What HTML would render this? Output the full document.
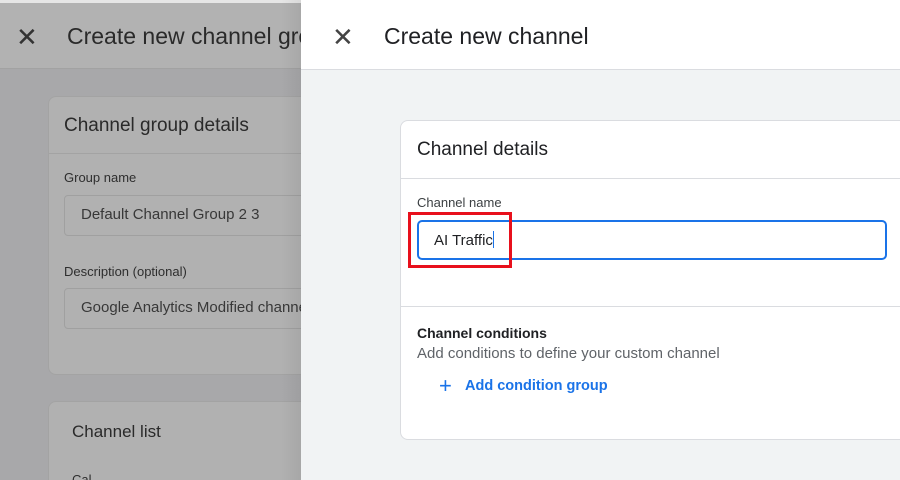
<!DOCTYPE html>
<html style="width:900px;height:480px;overflow:hidden"><head><style>
*{margin:0;padding:0;box-sizing:border-box}
body{width:900px;height:480px;overflow:hidden;position:relative;font-family:"Liberation Sans",Arial,sans-serif;background:#a8a8aa}
.abs{position:absolute}
.t{white-space:nowrap}
</style></head><body>
<div class="abs" style="left:0;top:0;width:301px;height:3px;background:#e6e6e6"></div>
<div class="abs" style="left:0;top:3px;width:301px;height:66px;background:#b2b2b2;border-bottom:1px solid #a2a2a2"></div>
<div class="abs t" style="left:16px;top:22px;font-size:26px;color:#333">✕</div>
<div class="abs t" style="left:67px;top:23px;font-size:23px;color:#2a2a2a">Create new channel gro</div>
<div class="abs" style="left:48px;top:96px;width:300px;height:279px;background:#b1b1b1;border:1px solid #a3a3a3;border-radius:8px"></div>
<div class="abs t" style="left:64px;top:115px;font-size:19px;color:#2a2a2a">Channel group details</div>
<div class="abs" style="left:48px;top:153px;width:253px;height:1px;background:#a3a3a3"></div>
<div class="abs t" style="left:64px;top:170px;font-size:13px;color:#2e2e2e">Group name</div>
<div class="abs" style="left:64px;top:195px;width:260px;height:41px;border:1px solid #a0a0a0;border-radius:4px"></div>
<div class="abs t" style="left:81px;top:206px;font-size:15px;color:#383838">Default Channel Group 2 3</div>
<div class="abs t" style="left:64px;top:264px;font-size:13px;color:#2e2e2e">Description (optional)</div>
<div class="abs" style="left:64px;top:288px;width:260px;height:41px;border:1px solid #a0a0a0;border-radius:4px"></div>
<div class="abs t" style="left:81px;top:299px;font-size:15px;color:#383838">Google Analytics Modified channe</div>
<div class="abs" style="left:48px;top:401px;width:300px;height:79px;background:#b1b1b1;border:1px solid #a3a3a3;border-bottom:none;border-radius:8px 8px 0 0"></div>
<div class="abs t" style="left:72px;top:422px;font-size:17px;color:#2a2a2a">Channel list</div>
<div class="abs t" style="left:72px;top:472px;font-size:13px;color:#2e2e2e;height:8px;overflow:hidden">Cal</div>
<div class="abs" style="left:281px;top:0;width:20px;height:480px;background:linear-gradient(to right,rgba(0,0,0,0),rgba(0,0,0,0.06))"></div>
<div class="abs" style="left:301px;top:0;width:599px;height:480px;background:#f1f3f4"></div>
<div class="abs" style="left:301px;top:0;width:599px;height:70px;background:#fff;border-bottom:1px solid #dadce0"></div>
<div class="abs t" style="left:332px;top:22px;font-size:26px;color:#444">✕</div>
<div class="abs t" style="left:384px;top:23px;font-size:23px;color:#202124">Create new channel</div>
<div class="abs" style="left:400px;top:120px;width:520px;height:320px;background:#fff;border:1px solid #dadce0;border-radius:8px"></div>
<div class="abs t" style="left:417px;top:139px;font-size:19px;color:#202124">Channel details</div>
<div class="abs" style="left:401px;top:178px;width:499px;height:1px;background:#dadce0"></div>
<div class="abs t" style="left:417px;top:195px;font-size:13px;color:#3c4043">Channel name</div>
<div class="abs" style="left:417px;top:220px;width:470px;height:40px;border:2px solid #1a73e8;border-radius:5px"></div>
<div class="abs t" style="left:434px;top:231px;font-size:15px;color:#202124">AI Traffic<span style="display:inline-block;width:1px;height:17px;background:#1a73e8;vertical-align:-3px"></span></div>
<div class="abs" style="left:408px;top:212px;width:104px;height:56px;border:3px solid #e8101c"></div>
<div class="abs" style="left:401px;top:306px;width:499px;height:1px;background:#dadce0"></div>
<div class="abs t" style="left:417px;top:325px;font-size:14px;font-weight:bold;color:#202124">Channel conditions</div>
<div class="abs t" style="left:417px;top:345px;font-size:15px;color:#5f6368">Add conditions to define your custom channel</div>
<div class="abs t" style="left:439px;top:373px;font-size:22px;color:#1a73e8">+</div>
<div class="abs t" style="left:465px;top:378px;font-size:14.5px;font-weight:bold;color:#1a73e8">Add condition group</div>
</body></html>
